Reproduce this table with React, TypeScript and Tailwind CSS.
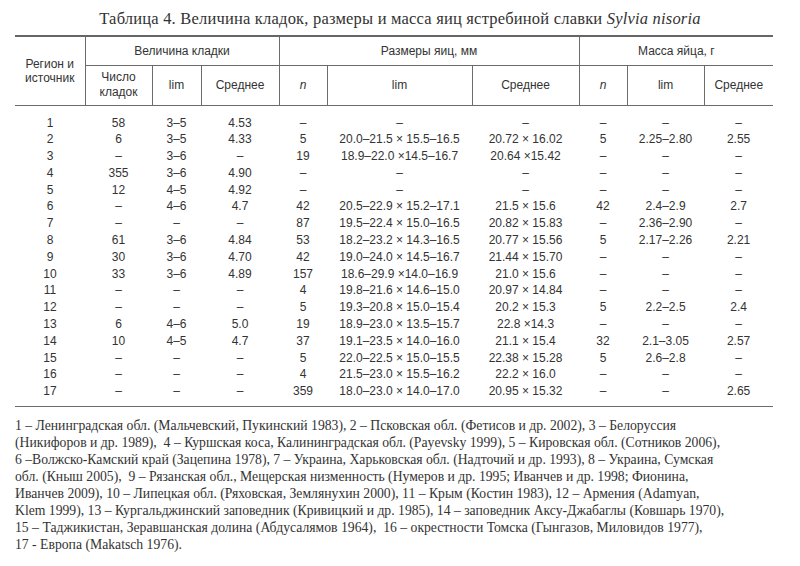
const cols = [70, 67, 49, 78, 48, 145, 107, 48, 77, 69];

const rows: string[][] = [
  ['1', '58', '3–5', '4.53', '–', '–', '–', '–', '–', '–'],
  ['2', '6', '3–5', '4.33', '5', '20.0–21.5 × 15.5–16.5', '20.72 × 16.02', '5', '2.25–2.80', '2.55'],
  ['3', '–', '3–6', '–', '19', '18.9–22.0 ×14.5–16.7', '20.64 ×15.42', '–', '–', '–'],
  ['4', '355', '3–6', '4.90', '–', '–', '–', '–', '–', '–'],
  ['5', '12', '4–5', '4.92', '–', '–', '–', '–', '–', '–'],
  ['6', '–', '4–6', '4.7', '42', '20.5–22.9 × 15.2–17.1', '21.5 × 15.6', '42', '2.4–2.9', '2.7'],
  ['7', '–', '–', '–', '87', '19.5–22.4 × 15.0–16.5', '20.82 × 15.83', '–', '2.36–2.90', '–'],
  ['8', '61', '3–6', '4.84', '53', '18.2–23.2 × 14.3–16.5', '20.77 × 15.56', '5', '2.17–2.26', '2.21'],
  ['9', '30', '3–6', '4.70', '42', '19.0–24.0 × 14.5–16.7', '21.44 × 15.70', '–', '–', '–'],
  ['10', '33', '3–6', '4.89', '157', '18.6–29.9 ×14.0–16.9', '21.0 × 15.6', '–', '–', '–'],
  ['11', '–', '–', '–', '4', '19.8–21.6 × 14.6–15.0', '20.97 × 14.84', '–', '–', '–'],
  ['12', '–', '–', '–', '5', '19.3–20.8 × 15.0–15.4', '20.2 × 15.3', '5', '2.2–2.5', '2.4'],
  ['13', '6', '4–6', '5.0', '19', '18.9–23.0 × 13.5–15.7', '22.8 ×14.3', '–', '–', '–'],
  ['14', '10', '4–5', '4.7', '37', '19.1–23.5 × 14.0–16.0', '21.1 × 15.4', '32', '2.1–3.05', '2.57'],
  ['15', '–', '–', '–', '5', '22.0–22.5 × 15.0–15.5', '22.38 × 15.28', '5', '2.6–2.8', '–'],
  ['16', '–', '–', '–', '4', '21.5–23.0 × 15.5–16.2', '22.2 × 16.0', '–', '–', '–'],
  ['17', '–', '–', '–', '359', '18.0–23.0 × 14.0–17.0', '20.95 × 15.32', '–', '–', '2.65'],
];

const notes = [
  '1 – Ленинградская обл. (Мальчевский, Пукинский 1983), 2 – Псковская обл. (Фетисов и др. 2002), 3 – Белоруссия',
  '(Никифоров и др. 1989),  4 – Куршская коса, Калининградская обл. (Payevsky 1999), 5 – Кировская обл. (Сотников 2006),',
  '6 –Волжско-Камский край (Зацепина 1978), 7 – Украина, Харьковская обл. (Надточий и др. 1993), 8 – Украина, Сумская',
  'обл. (Кныш 2005),  9 – Рязанская обл., Мещерская низменность (Нумеров и др. 1995; Иванчев и др. 1998; Фионина,',
  'Иванчев 2009), 10 – Липецкая обл. (Ряховская, Землянухин 2000), 11 – Крым (Костин 1983), 12 – Армения (Adamyan,',
  'Klem 1999), 13 – Кургальджинский заповедник (Кривицкий и др. 1985), 14 – заповедник Аксу-Джабаглы (Ковшарь 1970),',
  '15 – Таджикистан, Зеравшанская долина (Абдусалямов 1964),  16 – окрестности Томска (Гынгазов, Миловидов 1977),',
  '17 - Европа (Makatsch 1976).',
];

const th = 'border-l border-[#6b6b6b] first:border-l-0 font-normal text-center align-middle px-1';

export default function App() {
  return (
    <div className="w-[800px] h-[566px] bg-white px-[15px] pt-[8px] text-[#2b2b2b]">
      <h1 className="text-center text-[16.5px] leading-[22px] tracking-[0.2px] font-['Liberation_Serif',serif] text-[#333] whitespace-nowrap">
        Таблица 4. Величина кладок, размеры и масса яиц ястребиной славки <i>Sylvia nisoria</i>
      </h1>

      <table className="mt-[5px] w-[758px] table-fixed border-collapse font-['Liberation_Sans',Arial,sans-serif] text-[12px] text-[#333]">
        <colgroup>
          {cols.map((w, i) => (
            <col key={i} style={{ width: w }} />
          ))}
        </colgroup>
        <thead>
          <tr className="h-[29px] border-t-2 border-[#666]">
            <th rowSpan={2} className={`${th} leading-[14px]`}>
              Регион и<br />источник
            </th>
            <th colSpan={3} className={`${th} border-b border-b-[#6b6b6b]`}>Величина кладки</th>
            <th colSpan={3} className={`${th} border-b border-b-[#6b6b6b]`}>Размеры яиц, мм</th>
            <th colSpan={3} className={`${th} border-b border-b-[#6b6b6b]`}>Масса яйца, г</th>
          </tr>
          <tr className="h-[40px] border-b border-[#6b6b6b]">
            <th className={`${th} !border-l leading-[15px]`}>
              Число<br />кладок
            </th>
            <th className={th}>lim</th>
            <th className={th}>Среднее</th>
            <th className={`${th} italic`}>n</th>
            <th className={th}>lim</th>
            <th className={th}>Среднее</th>
            <th className={`${th} italic`}>n</th>
            <th className={th}>lim</th>
            <th className={th}>Среднее</th>
          </tr>
        </thead>
        <tbody className="border-b border-[#6b6b6b]">
          {rows.map((r, i) => (
            <tr key={i}>
              {r.map((c, j) => (
                <td
                  key={j}
                  className={`text-center leading-[16.8px] p-0 whitespace-nowrap ${
                    i === 0 ? 'pt-[9px]' : ''
                  } ${i === rows.length - 1 ? 'pb-[6px]' : ''}`}
                >
                  {c}
                </td>
              ))}
            </tr>
          ))}
        </tbody>
      </table>

      <div className="mt-[10px] font-['Liberation_Serif',serif] text-[13.7px] leading-[17px] text-[#333]">
        {notes.map((n, i) => (
          <div key={i} className="whitespace-pre">
            {n}
          </div>
        ))}
      </div>
    </div>
  );
}
